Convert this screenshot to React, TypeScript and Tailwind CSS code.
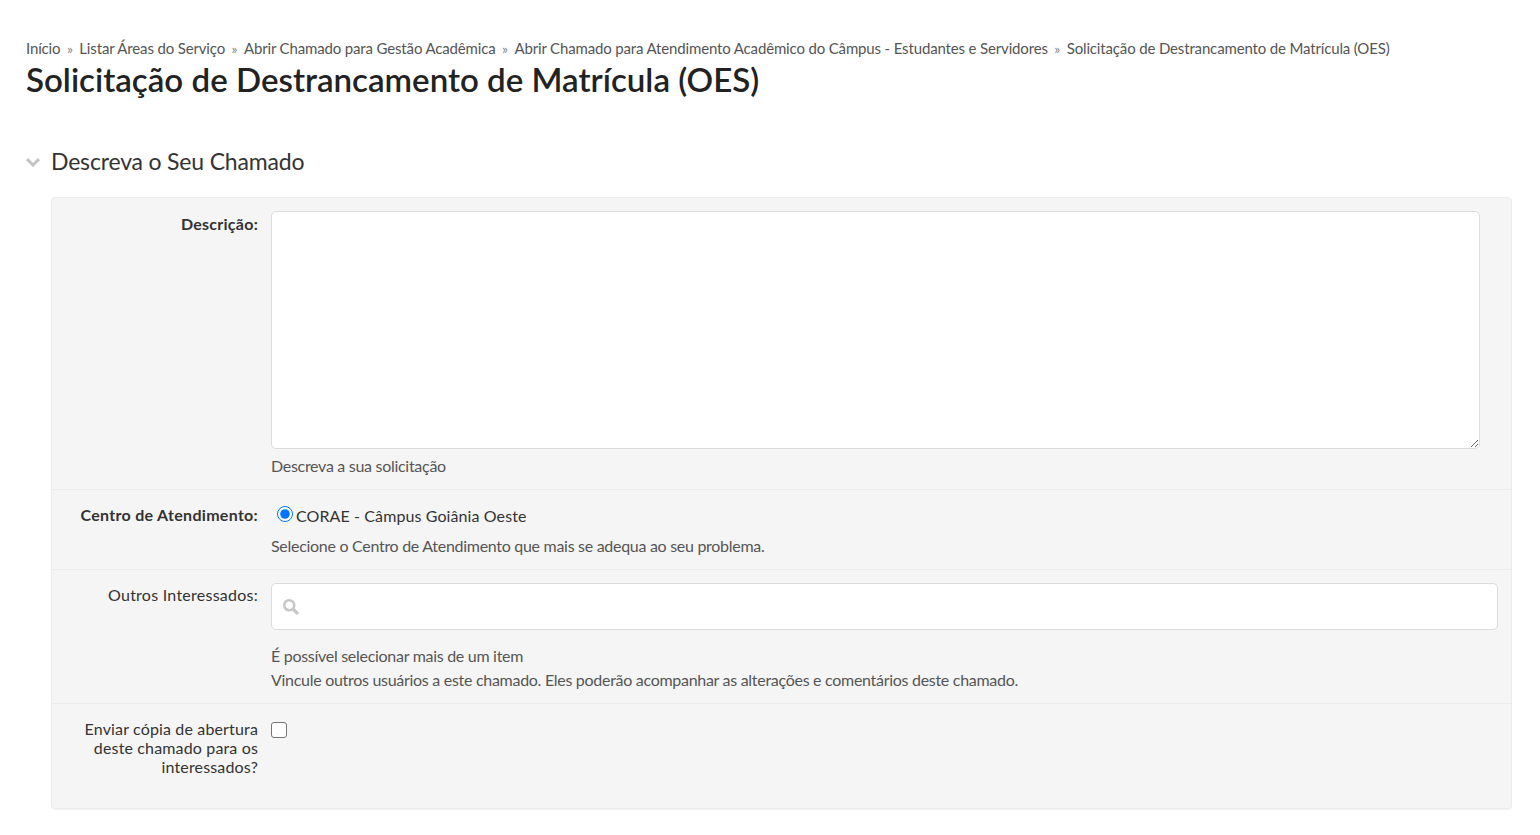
import React from "react";

function Sep() {
  return <span className="mx-[6.5px] text-[14px] text-[#888]">»</span>;
}

function Row({ label, labelClass, children, className }: { label: React.ReactNode; labelClass: string; children: React.ReactNode; className: string }) {
  return (
    <div className={`flex border-b border-[#ececec] last:border-b-0 ${className}`}>
      <div className={`w-[206px] shrink-0 text-right text-[16px] leading-[19px] text-[#333] ${labelClass}`}>{label}</div>
      <div className="ml-[13px] min-w-0 flex-1 pt-[13px]">{children}</div>
    </div>
  );
}

const help = "text-[16px] tracking-[-0.29px] text-[#555]";

export default function App() {
  return (
    <div className="min-h-[835px] bg-white pl-[26px] pr-[28px] pt-[38px] font-['Lato',sans-serif] text-[#333]">
      <nav className="whitespace-nowrap text-[15px] leading-[20px] tracking-[-0.15px] text-[#555]">
        <span>Início</span><Sep />
        <span>Listar Áreas do Serviço</span><Sep />
        <span>Abrir Chamado para Gestão Acadêmica</span><Sep />
        <span>Abrir Chamado para Atendimento Acadêmico do Câmpus - Estudantes e Servidores</span><Sep />
        <span>Solicitação de Destrancamento de Matrícula (OES)</span>
      </nav>
      <h1 className="text-[33.1px] font-semibold leading-[40px] text-[#222]">Solicitação de Destrancamento de Matrícula (OES)</h1>

      <div className="mt-[47px] flex items-center">
        <svg width="14" height="9" viewBox="0 0 14 9" className="mr-[11px] mt-[2px]" fill="none" stroke="#c4c4c4" strokeWidth="3">
          <path d="M1 1.2 L7 7 L13 1.2" />
        </svg>
        <h2 className="text-[23px] font-normal leading-[30px] tracking-[-0.18px] text-[#333]">Descreva o Seu Chamado</h2>
      </div>

      <form className="ml-[25px] mt-[21px] flex h-[612px] flex-col rounded-[4px] border border-[#ececec] bg-[#f5f5f5] shadow-[0_1px_1px_rgba(0,0,0,0.05)]">
        <Row label="Descrição:" labelClass="pt-[16px] font-bold tracking-[0.25px]" className="h-[292px]">
          <textarea className="block h-[238px] w-[1209px] rounded-[5px] border border-[#dcdcdc] bg-white" />
          <p className={`mt-[7px] leading-[20px] ${help}`}>Descreva a sua solicitação</p>
        </Row>
        <Row label="Centro de Atendimento:" labelClass="pt-[15px] font-bold tracking-[0.3px]" className="h-[80px]">
          <label className="flex h-[20px] translate-y-[3px] items-center text-[16px] tracking-[0.1px] text-[#333]">
            <input type="radio" name="centro" defaultChecked className="ml-[6px] mr-[3px] h-[16px] w-[16px] -translate-y-[2px] accent-[#0075ff]" />
            CORAE - Câmpus Goiânia Oeste
          </label>
          <p className={`mt-[13px] leading-[20px] ${help}`}>Selecione o Centro de Atendimento que mais se adequa ao seu problema.</p>
        </Row>
        <Row label="Outros Interessados:" labelClass="pt-[15px] tracking-[0.25px]" className="h-[134px]">
          <div className="mr-[13px] flex h-[47px] items-center rounded-[5px] border border-[#dcdcdc] bg-white pl-[10px]">
            <svg width="18" height="18" viewBox="0 0 18 18" fill="none" stroke="#c8c8c8" strokeWidth="2.6">
              <circle cx="7.2" cy="7.2" r="5" />
              <path d="M11 11 L16 16" strokeWidth="3.2" />
            </svg>
          </div>
          <p className={`mt-[14px] leading-[24px] ${help}`}>
            É possível selecionar mais de um item
            <br />
            Vincule outros usuários a este chamado. Eles poderão acompanhar as alterações e comentários deste chamado.
          </p>
        </Row>
        <Row
          label={<>Enviar cópia de abertura<br />deste chamado para os<br />interessados?</>}
          labelClass="pt-[15px] tracking-[0.15px]"
          className="flex-1"
        >
          <span className="mt-[5px] block h-[16px] w-[16px] rounded-[3px] border border-[#767676] bg-white" />
        </Row>
      </form>
    </div>
  );
}
